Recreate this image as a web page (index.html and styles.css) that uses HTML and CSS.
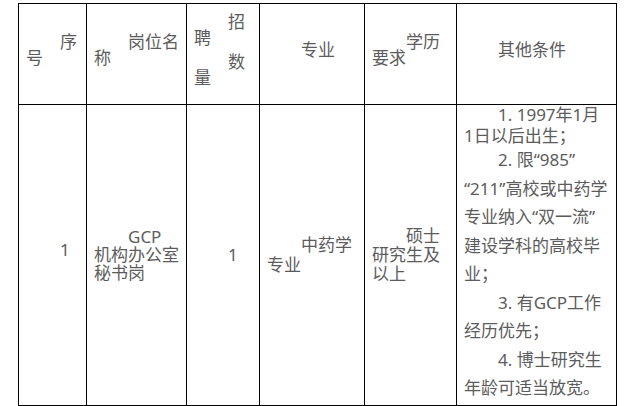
FILE: index.html
```html
<!DOCTYPE html>
<html lang="zh-CN">
<head>
<meta charset="utf-8">
<title>岗位表</title>
<link rel="stylesheet" href="styles.css">
</head>
<body>
<table class="job-table">
  <colgroup>
    <col class="w1"><col class="w2"><col class="w3"><col class="w4"><col class="w5"><col class="w6">
  </colgroup>
  <thead>
    <tr class="head-row">
      <th><div class="para">序<br>号</div></th>
      <th><div class="para">岗位名<br>称</div></th>
      <th><div class="para">招<br>聘</div><div class="para gap">数<br>量</div></th>
      <th><div class="para">专业</div></th>
      <th><div class="para">学历<br>要求</div></th>
      <th><div class="para">其他条件</div></th>
    </tr>
  </thead>
  <tbody>
    <tr class="body-row">
      <td class="seq"><div class="para">1</div></td>
      <td><div class="para">GCP<br>机构办公室<br>秘书岗</div></td>
      <td><div class="para">1</div></td>
      <td class="major"><div class="para">中药学<br>专业</div></td>
      <td class="degree"><div class="para">硕士<br>研究生及<br>以上</div></td>
      <td class="cond">
        <div class="para first">1. 1997年1月<br>1日以后出生；</div>
        <div class="para">2. 限“985”<br>“211”高校或中药学<br>专业纳入“双一流”<br>建设学科的高校毕<br>业；</div>
        <div class="para">3. 有GCP工作<br>经历优先；</div>
        <div class="para">4. 博士研究生<br>年龄可适当放宽。</div>
      </td>
    </tr>
  </tbody>
</table>
</body>
</html>
```

FILE: styles.css
```css
html, body {
  margin: 0;
  background: #ffffff;
}

body {
  padding: 3px 0 0 18px;
  font-family: "Noto Sans", "Noto Sans CJK SC", sans-serif;
  font-size: 17px;
  color: #5c5c5c;
}

.job-table {
  border-collapse: collapse;
  table-layout: fixed;
  width: 598px;
}

.w1 { width: 68px; }
.w2 { width: 100px; }
.w3 { width: 73px; }
.w4 { width: 105px; }
.w5 { width: 92px; }
.w6 { width: 160px; }

.job-table th,
.job-table td {
  border: 1px solid #000000;
  padding: 0 7px;
  text-align: left;
  font-weight: normal;
  vertical-align: middle;
  text-indent: 2em;
  white-space: nowrap;
}

.head-row {
  height: 101px;
}

.head-row th {
  line-height: 16px;
  padding-bottom: 8px;
}

.head-row .gap {
  margin-top: 8px;
}

.body-row {
  height: 300px;
}

.body-row td {
  line-height: 18px;
}

.body-row .seq {
  padding-bottom: 9px;
}

.body-row .major {
  line-height: 20px;
}

.body-row .degree {
  line-height: 19px;
}

.body-row .cond {
  vertical-align: top;
  line-height: 28.5px;
  padding-top: 0;
  padding-bottom: 2px;
}

.body-row .cond .first {
  line-height: 20.5px;
}
```
